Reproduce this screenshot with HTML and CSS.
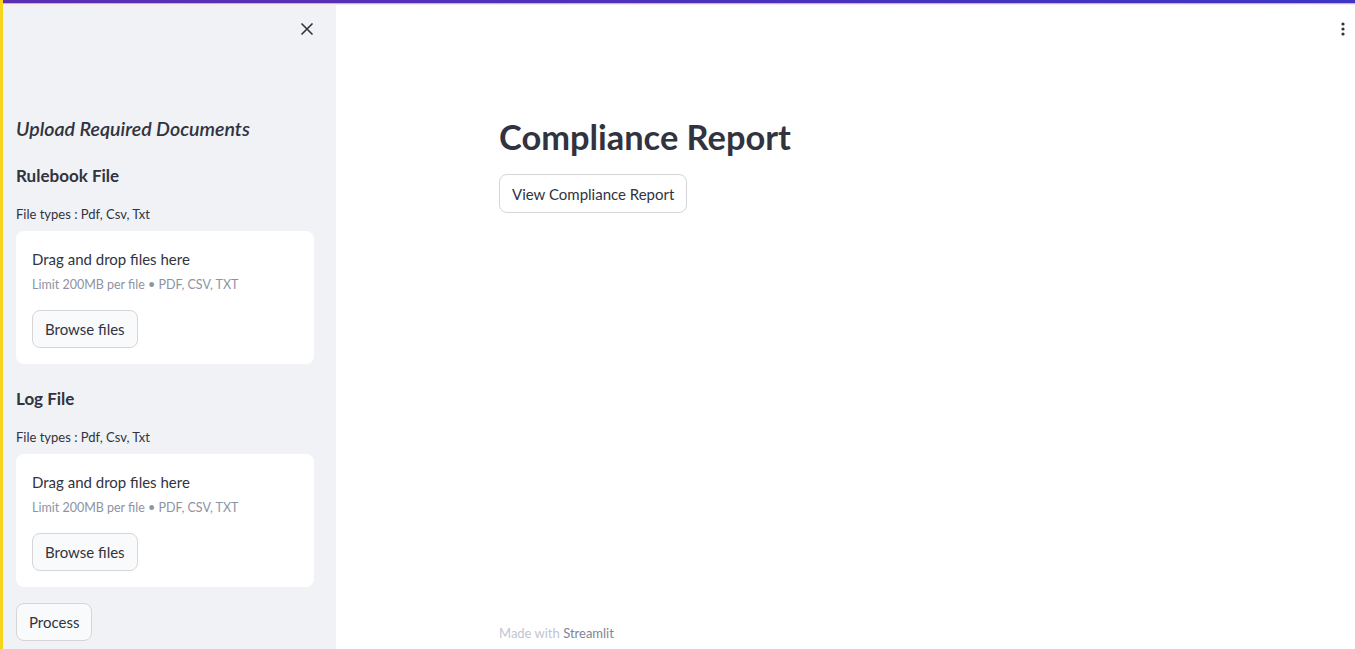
FILE: index.html
```html
<!DOCTYPE html>
<html>
<head>
<meta charset="utf-8">
<link rel="stylesheet" href="styles.css">
</head>
<body>
<div class="deco"></div>
<div class="app">
  <aside class="sidebar">
    <div class="side-top">
      <button class="close" aria-label="Close">
        <svg width="14" height="14" viewBox="0 0 14 14"><path d="M1.5 1.5 L12.5 12.5 M12.5 1.5 L1.5 12.5" stroke="#31333f" stroke-width="1.6" fill="none"/></svg>
      </button>
    </div>
    <div class="side-content">
      <h3 class="upload-title">Upload Required Documents</h3>
      <h4 class="sec-title">Rulebook File</h4>
      <div class="label">File types : Pdf, Csv, Txt</div>
      <div class="dropzone">
        <div class="dz-main">Drag and drop files here</div>
        <div class="dz-sub">Limit 200MB per file • PDF, CSV, TXT</div>
        <button class="btn">Browse files</button>
      </div>
      <h4 class="sec-title log">Log File</h4>
      <div class="label">File types : Pdf, Csv, Txt</div>
      <div class="dropzone">
        <div class="dz-main">Drag and drop files here</div>
        <div class="dz-sub">Limit 200MB per file • PDF, CSV, TXT</div>
        <button class="btn">Browse files</button>
      </div>
      <button class="btn process">Process</button>
    </div>
  </aside>
  <main class="main">
    <div class="menu">
      <svg width="4" height="14" viewBox="0 0 4 14"><circle cx="2" cy="2" r="1.6" fill="#31333f"/><circle cx="2" cy="7" r="1.6" fill="#31333f"/><circle cx="2" cy="12" r="1.6" fill="#31333f"/></svg>
    </div>
    <div class="block">
      <h1 class="title">Compliance Report</h1>
      <button class="btn white">View Compliance Report</button>
    </div>
    <footer class="footer">Made with <span>Streamlit</span></footer>
  </main>
</div>
</body>
</html>
```

FILE: styles.css
```css
* { box-sizing: border-box; }
html, body { margin: 0; padding: 0; height: 100%; overflow: hidden; }
body {
  font-family: "Lato", "Open Sans", sans-serif;
  color: #31333f;
  background: #fff;
  border-left: 3px solid #f7d51c;
  position: relative;
}
.deco {
  position: absolute;
  top: 0; left: 0; right: 0;
  height: 5px;
  background:
    linear-gradient(to bottom, transparent 0, transparent 3px, #f4a3a8 3px, #f4a3a8 4px, #fce9ea 4px, #fce9ea 5px),
    linear-gradient(to right, #5a2fb2, #3d35c4);
  background-size: 100% 5px, 100% 3px;
  background-repeat: no-repeat;
  z-index: 5;
}
.app { display: flex; height: 100%; }
.sidebar {
  width: 333px;
  flex: none;
  background: #f0f2f6;
  display: flex;
  flex-direction: column;
}
.side-top {
  height: 58px;
  display: flex;
  justify-content: flex-end;
  align-items: flex-start;
  padding: 22px 22px 0 0;
}
.close { background: none; border: none; padding: 0; width: 14px; height: 14px; display: flex; }
.side-content { padding: 0 22px 0 13px; display: flex; flex-direction: column; }
.upload-title {
  margin: 58px 0 0;
  font-size: 19.6px;
  font-style: italic;
  font-weight: 600;
  line-height: 26px;
}
.sec-title {
  margin: 22px 0 0;
  font-size: 17px;
  font-weight: 700;
  line-height: 24px;
}
.sec-title.log { margin-top: 23px; }
.label { font-size: 13px; margin-top: 18px; line-height: 16px; }
.dropzone {
  margin-top: 9px;
  background: #fff;
  border-radius: 8px;
  padding: 17px 16px 16px;
  height: 133px;
}
.dz-main { font-size: 15px; line-height: 22px; }
.dz-sub { font-size: 12.5px; color: #8e93a3; margin-top: 6px; line-height: 18px; }
.btn {
  font-family: inherit;
  font-size: 15px;
  color: #31333f;
  background: #f9fafb;
  border: 1px solid #d6d6d9;
  border-radius: 8px;
  height: 38px;
  padding: 0 12px;
  display: inline-flex;
  align-items: center;
}
.dropzone .btn { margin-top: 16px; }
.process { margin-top: 16px; align-self: flex-start; }
.main { flex: 1; position: relative; display: flex; flex-direction: column; }
.menu { position: absolute; top: 20px; right: 10px; }
.block { padding: 114px 0 0 163px; display: flex; flex-direction: column; align-items: flex-start; }
.title { margin: 0; font-size: 34.4px; font-weight: 700; line-height: 46px; letter-spacing: 0; }
.white { background: #fff; margin-top: 14px; height: 39px; }
.footer { margin-top: auto; padding: 0 0 6px 163px; font-size: 13px; color: #bfc5d3; line-height: 20px; }
.footer span { color: #808495; }
```
